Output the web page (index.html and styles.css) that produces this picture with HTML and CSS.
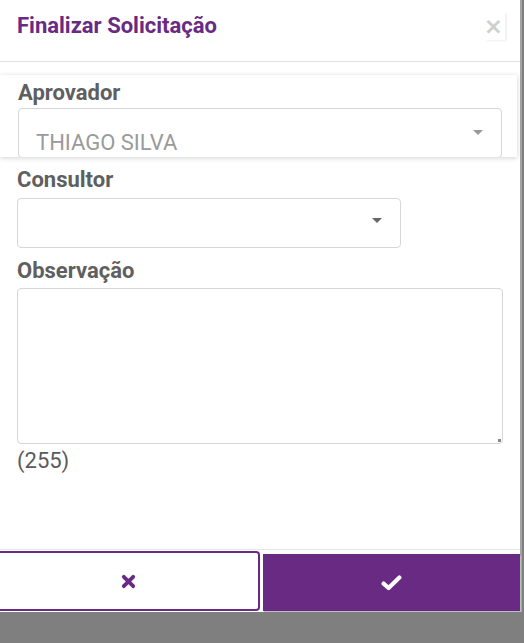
FILE: index.html
```html
<!DOCTYPE html>
<html lang="pt-br">
<head>
<meta charset="utf-8">
<title>Finalizar Solicitação</title>
<meta name="viewport" content="width=device-width, initial-scale=1" />
<link rel="stylesheet" href="styles.css">
</head>
<body>
  <div class="modal">
    <div class="modal-header">
      <h4 class="modal-title">Finalizar Solicitação</h4>
      <button class="close" type="button">&times;</button>
    </div>

    <div class="modal-body">
      <!-- Aprovador fica num cartão com sombra, cortado embaixo -->
      <div class="card">
        <label class="field-label">Aprovador</label>
        <div class="select select-wide">
          <span class="select-value">THIAGO SILVA</span>
          <span class="caret"></span>
        </div>
      </div>

      <div class="field">
        <label class="field-label">Consultor</label>
        <div class="select select-short">
          <span class="select-value"></span>
          <span class="caret"></span>
        </div>
      </div>

      <div class="field">
        <label class="field-label field-obs">Observação</label>
        <div class="textarea">
          <span class="grip"></span>
        </div>
        <p class="counter">(255)</p>
      </div>
    </div>

    <div class="modal-footer">
      <button class="btn btn-cancel" type="button">
        <svg width="15" height="15" viewBox="0 0 15 15">
          <path d="M2.8 2.8 L12.2 12.2 M12.2 2.8 L2.8 12.2" stroke="#692a84" stroke-width="3.8" stroke-linecap="round" fill="none" />
        </svg>
      </button>
      <button class="btn btn-ok" type="button">
        <svg width="21" height="16" viewBox="0 0 21 16">
          <polyline points="2.6,8.6 7.6,13 18.4,2.6" stroke="#fff" stroke-width="4.2" stroke-linecap="round" stroke-linejoin="round" fill="none" />
        </svg>
      </button>
    </div>
  </div>
</body>
</html>
```

FILE: styles.css
```css
body {
  margin: 0;
  background-color: #7f7f7f;
  font-family: Roboto, "Noto Sans", sans-serif;
}

.modal {
  width: 520px;
  height: 612px;
  background-color: #fff;
  border-right: 2px solid #a3a3a3;
  display: flex;
  flex-direction: column;
}

/* Cabeçalho */
.modal-header {
  height: 62px;
  box-sizing: border-box;
  padding: 13px 15px 0 17px;
  display: flex;
  justify-content: space-between;
  align-items: flex-start;
  border-bottom: 1px solid #e3e3e3;
}
.modal-title {
  margin: 0;
  font-size: 22px;
  line-height: 26px;
  font-weight: bold;
  color: #692a84;
}
.close {
  margin: -1px 0 0 0;
  padding: 0 2px 0 0;
  border: 0;
  background: #fff;
  font-family: "DejaVu Sans", sans-serif;
  font-size: 23px;
  line-height: 20px;
  font-weight: bold;
  color: #cfcfcf;
  box-shadow: 2px 1px 2px rgba(0, 0, 0, .06);
  height: 28px;
}

/* Corpo */
.modal-body {
  flex: 1;
  padding-top: 13px;
}
.card {
  height: 82px;
  box-sizing: border-box;
  margin-right: 3px;
  padding: 5px 0 0 18px;
  overflow: hidden;
  box-shadow: 0 1px 5px rgba(0, 0, 0, .18);
}
.field {
  padding: 0 0 0 17px;
}
.field-label {
  display: block;
  font-size: 22px;
  line-height: 26px;
  font-weight: bold;
  color: #5f5f5f;
}
.card .field-label { margin-bottom: 2px; }
.field .field-label { margin-top: 10px; margin-bottom: 5px; }
.field .field-obs { margin-top: 10px; margin-bottom: 4px; }

.select {
  position: relative;
  box-sizing: border-box;
  height: 50px;
  border: 1px solid #d6d6d6;
  border-radius: 4px;
}
.select-wide  { width: 484px; }
.select-short { width: 384px; }
.select-value {
  display: block;
  padding: 21px 0 0 17px;
  font-size: 22px;
  line-height: 26px;
  color: #9a9a9a;
}
.caret {
  position: absolute;
  right: 18px;
  top: 19px;
  width: 0;
  height: 0;
  border-left: 5px solid transparent;
  border-right: 5px solid transparent;
  border-top: 5px solid #666;
}
.card .caret { top: 21px; right: 18px; border-top-color: #999; }

.textarea {
  position: relative;
  width: 486px;
  height: 156px;
  box-sizing: border-box;
  border: 1px solid #d6d6d6;
  border-radius: 4px;
}
.grip {
  position: absolute;
  right: 1px;
  bottom: 1px;
  width: 3px;
  height: 3px;
  background-color: #888;
}
.counter {
  margin: 4px 0 0 0;
  font-size: 22px;
  line-height: 26px;
  color: #5a5a5a;
}

/* Rodapé com os dois botões */
.modal-footer {
  display: flex;
  gap: 3px;
  padding-top: 1px;
  border-top: 1px solid #e6e6e6;
  height: 63px;
  box-sizing: border-box;
}
.btn {
  flex: 1;
  border: 0;
  margin: 0;
  display: flex;
  align-items: center;
  justify-content: center;
}
.btn-cancel {
  height: 60px;
  background-color: #fff;
  border: 2px solid #692a84;
  border-left: 0;
  border-radius: 0 4px 4px 0;
}
.btn-ok {
  margin-top: 3px;
  height: 57px;
  background-color: #692a84;
  box-shadow: 1px 2px 1px #bdbdbd;
}
```
